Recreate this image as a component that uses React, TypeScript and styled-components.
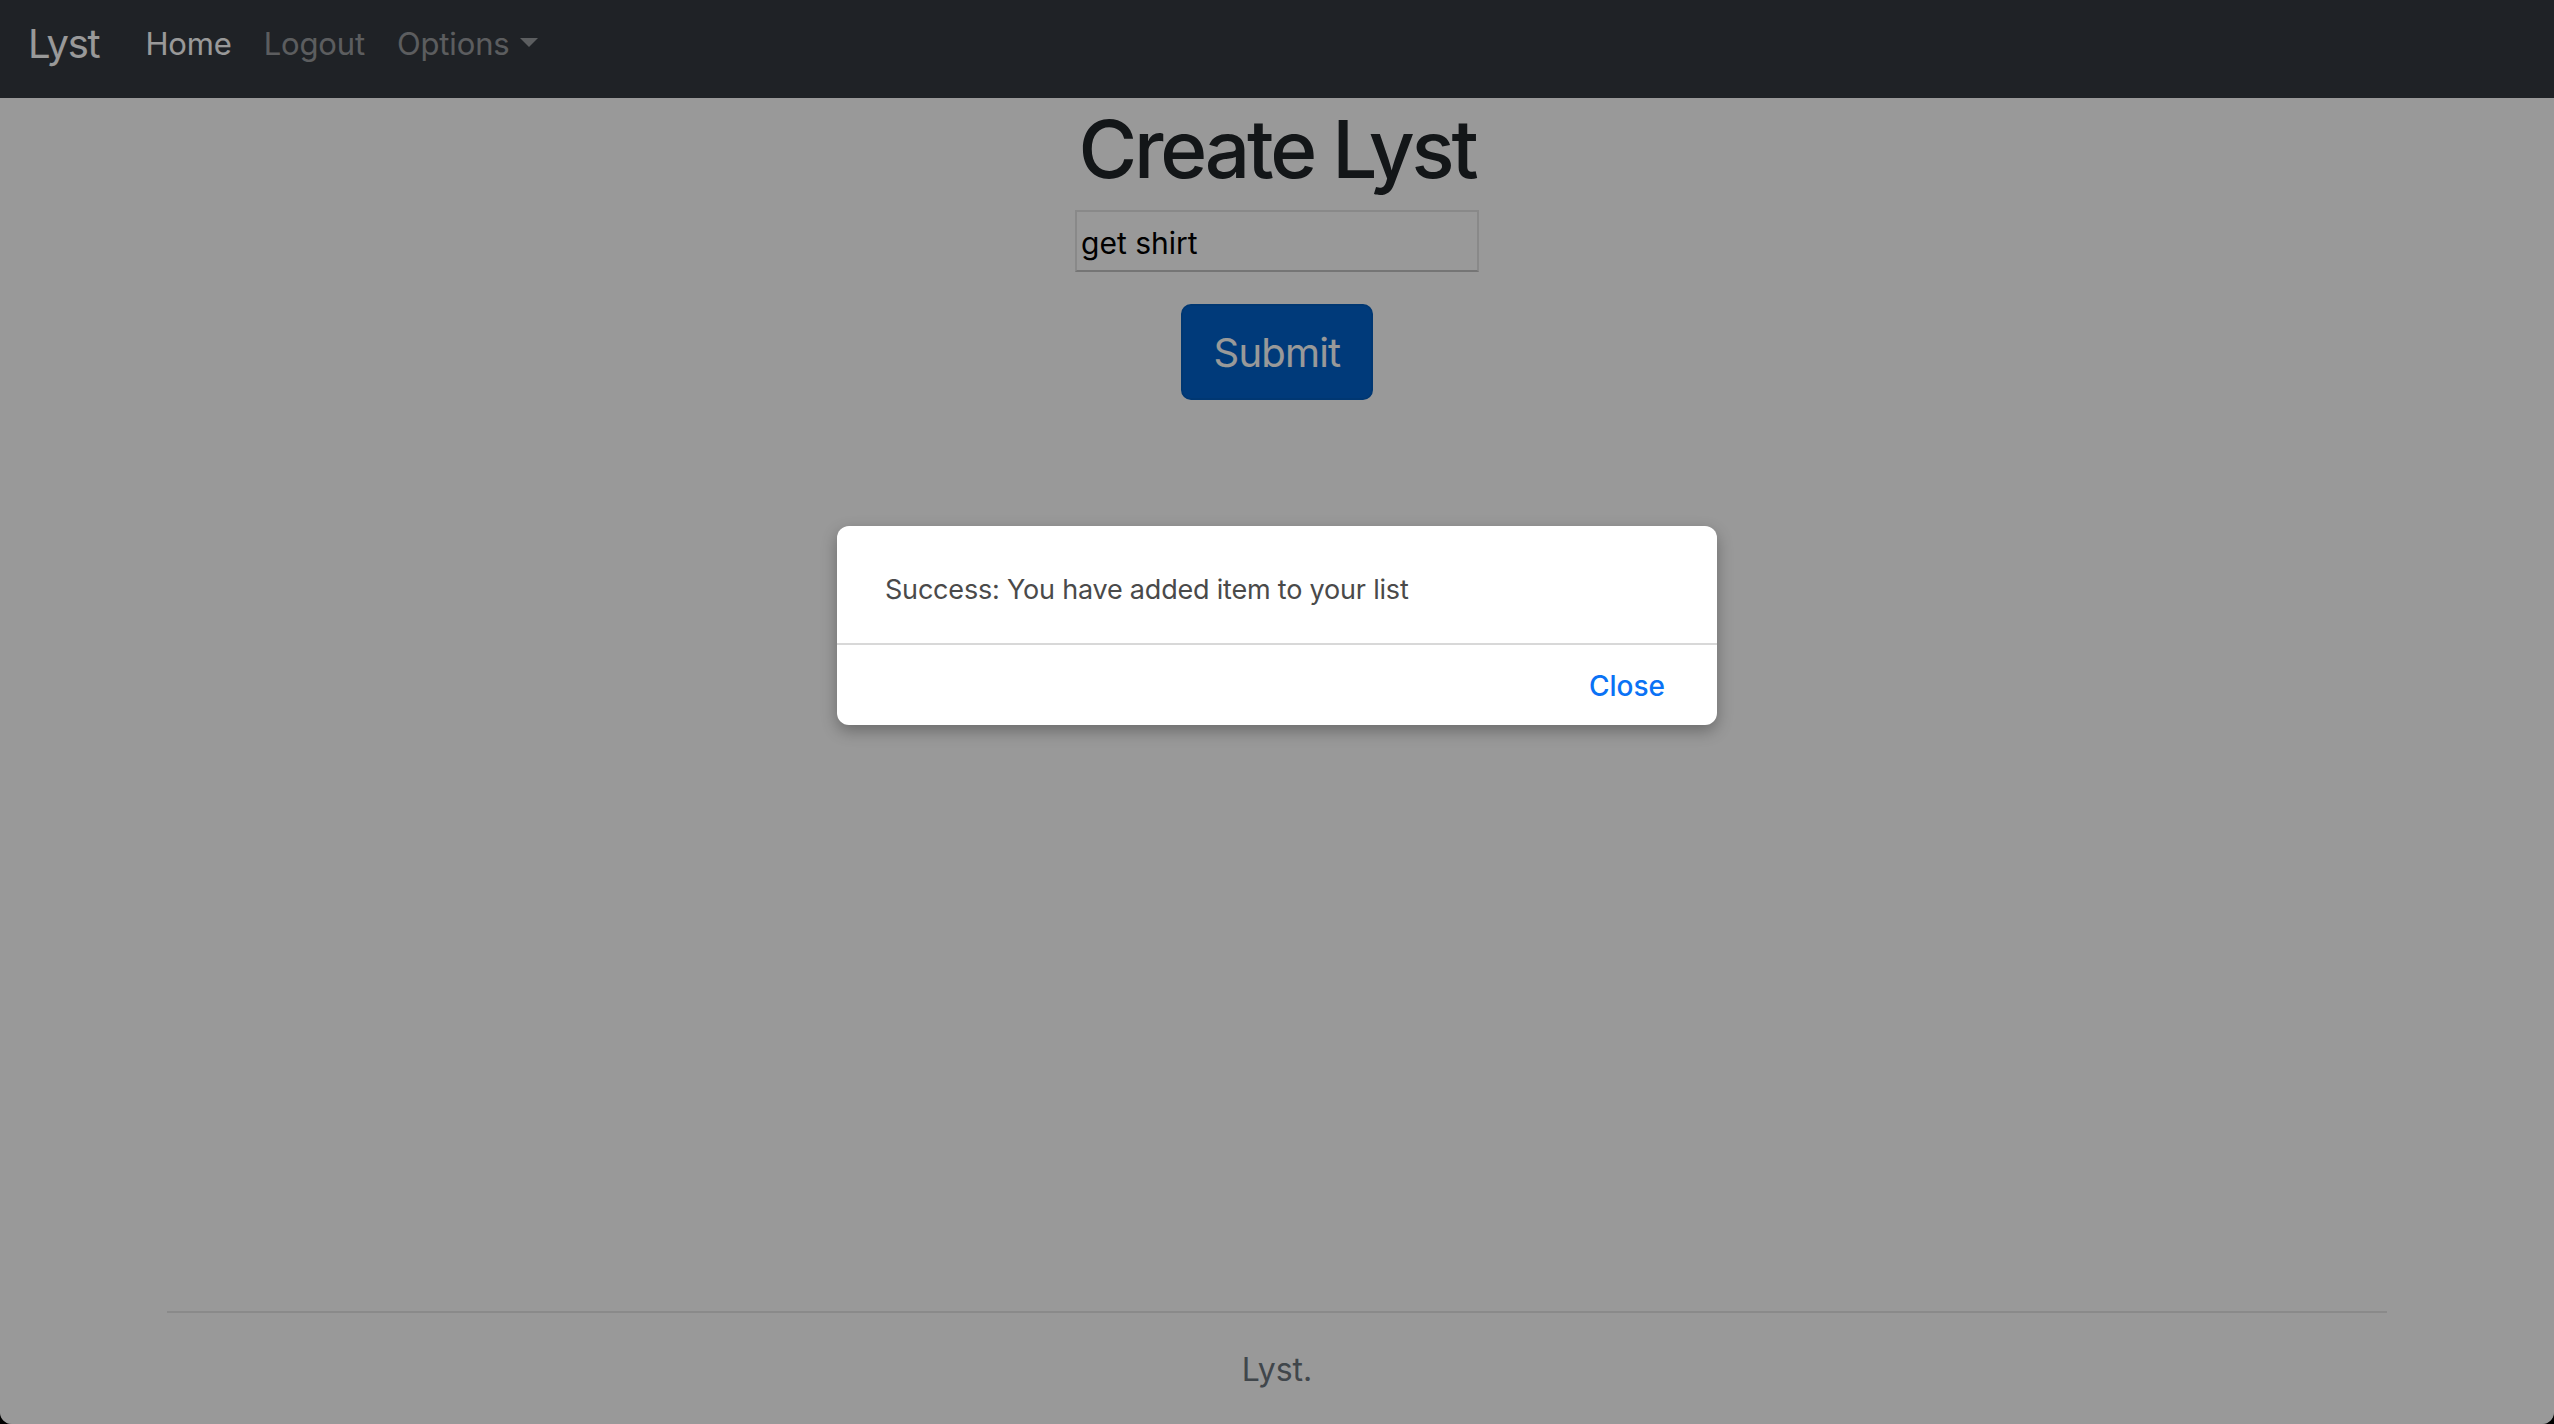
import React from "react";
import styled, { createGlobalStyle } from "styled-components";

const Global = createGlobalStyle`
  html, body {
    margin: 0;
    padding: 0;
    background: #000;
  }
  body {
    font-family: Inter, "Noto Sans", "Liberation Sans", sans-serif;
  }
  * { box-sizing: border-box; }
`;

const Page = styled.div`
  position: relative;
  min-height: 100vh;
  display: flex;
  flex-direction: column;
  background: #fff;
  border-radius: 0 0 12px 12px;
  overflow: hidden;
`;

const Navbar = styled.nav`
  height: 98px;
  display: flex;
  align-items: center;
  padding: 0 28px 12px;
  background: #343a40;
`;

const Brand = styled.a`
  font-size: 40px;
  color: #fff;
  margin-right: 30px;
  letter-spacing: -1.3px;
`;

const NavLink = styled.a<{ $active?: boolean }>`
  font-size: 31px;
  padding: 0 16px;
  color: ${(p) => (p.$active ? "#fff" : "rgba(255,255,255,0.5)")};
  display: flex;
  align-items: center;
  letter-spacing: -0.15px;
`;

const Caret = styled.span`
  display: inline-block;
  margin-left: 10px;
  margin-top: -2px;
  border-top: 9px solid currentColor;
  border-left: 9px solid transparent;
  border-right: 9px solid transparent;
`;

const Main = styled.main`
  flex: 1;
  display: flex;
  flex-direction: column;
  align-items: center;
`;

const Title = styled.h1`
  margin: 3px 0 13px;
  font-size: 80px;
  line-height: 1.2;
  font-weight: 500;
  color: #212529;
  letter-spacing: -3.2px;
`;

const TextInput = styled.input`
  width: 404px;
  height: 62px;
  border: 2px solid #e4e4e4;
  border-bottom-color: #c4c4c4;
  background: #fff;
  padding: 4px 4px 0;
  font-family: Inter, "Noto Sans", sans-serif;
  font-size: 30px;
  color: #000;
  outline: none;
`;

const SubmitButton = styled.button`
  margin-top: 32px;
  height: 96px;
  padding: 0 31px;
  border: 2px solid #005cbf;
  border-radius: 10px;
  background: #0062cc;
  color: #fff;
  font-family: Inter, "Noto Sans", sans-serif;
  font-size: 40px;
  letter-spacing: -0.8px;
`;

const Footer = styled.footer`
  width: 2220px;
  margin: 0 auto;
  display: flex;
  flex-direction: column;
  align-items: center;
`;

const Rule = styled.div`
  align-self: stretch;
  height: 2px;
  background: #e6e6e6;
`;

const FooterText = styled.p`
  margin: 33px 0 30px;
  font-size: 32px;
  line-height: 48px;
  color: #6c757d;
`;

const Overlay = styled.div`
  position: absolute;
  inset: 0;
  background: rgba(0, 0, 0, 0.4);
  display: flex;
  justify-content: center;
  align-items: flex-start;
  padding-top: 526px;
`;

const Dialog = styled.div`
  width: 880px;
  background: #fff;
  border-radius: 12px;
  box-shadow: 0 6px 16px rgba(0, 0, 0, 0.3);
  overflow: hidden;
`;

const DialogBody = styled.div`
  height: 119px;
  display: flex;
  align-items: center;
  padding: 9px 48px 0 48px;
  border-bottom: 2px solid #d8d8d8;
  font-size: 27px;
  color: #4a4a4a;
  letter-spacing: -0.2px;
`;

const DialogFooter = styled.div`
  height: 80px;
  display: flex;
  align-items: center;
  justify-content: flex-end;
  padding: 2px 52px 0 0;
`;

const CloseButton = styled.button`
  border: none;
  background: none;
  padding: 0;
  font-family: Inter, "Noto Sans", sans-serif;
  font-size: 28px;
  font-weight: 500;
  color: #0a72f5;
`;

export default function App() {
  return (
    <>
      <Global />
      <Page>
        <Navbar>
          <Brand>Lyst</Brand>
          <NavLink $active>Home</NavLink>
          <NavLink>Logout</NavLink>
          <NavLink>
            Options
            <Caret />
          </NavLink>
        </Navbar>
        <Main>
          <Title>Create Lyst</Title>
          <TextInput defaultValue="get shirt" />
          <SubmitButton>Submit</SubmitButton>
        </Main>
        <Footer>
          <Rule />
          <FooterText>Lyst.</FooterText>
        </Footer>
        <Overlay>
          <Dialog>
            <DialogBody>Success: You have added item to your list</DialogBody>
            <DialogFooter>
              <CloseButton>Close</CloseButton>
            </DialogFooter>
          </Dialog>
        </Overlay>
      </Page>
    </>
  );
}
